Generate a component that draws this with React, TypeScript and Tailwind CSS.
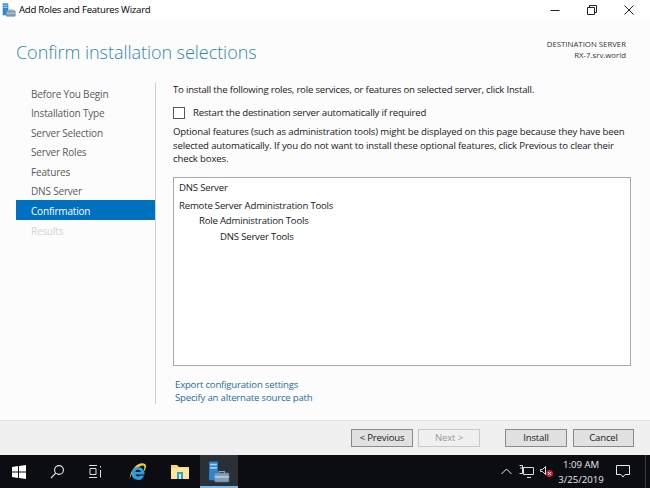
import React from "react";

const steps = ["Before You Begin", "Installation Type", "Server Selection", "Server Roles", "Features", "DNS Server"];

function AppIcon({ size = 14 }: { size?: number }) {
  return (
    <svg width={size} height={size} viewBox="0 0 20 20">
      <rect x="1" y="0.500" width="8" height="17" fill="#2a86d0" />
      <rect x="2" y="2.500" width="6" height="1.500" fill="#a9d4f2" />
      <rect x="2" y="5.500" width="6" height="1.500" fill="#a9d4f2" />
      <rect x="6" y="11" width="13" height="8" rx="1" fill="#7f9fb8" stroke="#5f7f98" strokeWidth="0.7" />
      <rect x="6" y="14" width="13" height="1" fill="#d5e2ec" />
      <path d="M10 11V9.500h5V11" fill="none" stroke="#8fa5b8" strokeWidth="1" />
    </svg>
  );
}

export default function App() {
  return (
    <div className="w-[650px] h-[488px] flex flex-col overflow-hidden bg-white text-[#1f1f1f] font-['Open_Sans','Noto_Sans',sans-serif] text-[10px] leading-none tracking-[-0.18px]">
      <div className="h-[20px] shrink-0 bg-white flex items-center pl-[2px]">
        <AppIcon />
        <span className="ml-[3px] text-[9.6px] tracking-[-0.25px] text-black">Add Roles and Features Wizard</span>
        <div className="ml-auto flex items-center text-[#222]">
          <svg width="10" height="10" viewBox="0 0 10 10" className="mr-[27px]"><path d="M0.500 5.500h9" stroke="#222" strokeWidth="1" /></svg>
          <svg width="10" height="10" viewBox="0 0 10 10" className="mr-[27px]"><path d="M0.500 2.500h7v7h-7zM2.500 2.500v-2h7v7h-2" fill="none" stroke="#222" strokeWidth="1" /></svg>
          <svg width="10" height="10" viewBox="0 0 10 10" className="mr-[16px]"><path d="M0.500 0.500l9 9M9.500 0.500l-9 9" stroke="#222" strokeWidth="1" /></svg>
        </div>
      </div>

      <div className="h-[400px] shrink-0 bg-[#fcfcfc] flex flex-col">
        <div className="h-[62px] shrink-0 flex justify-between pl-[16px] pr-[24px]">
          <h1 className="mt-[20px] text-[18px] leading-[24px] font-light text-[#2e88ad] tracking-[-0.05px]">Confirm installation selections</h1>
          <div className="mt-[19px] text-right text-[7.8px] leading-[11px] tracking-normal text-[#333]">
            <div>DESTINATION SERVER</div>
            <div>RX-7.srv.world</div>
          </div>
        </div>

        <div className="flex pl-[16px]">
          <nav className="w-[140px] h-[322px] shrink-0 border-r border-[#d0d0d0] text-[#5a5a5a]">
            <div className="flex flex-col pt-[2px]">
              {steps.map((s) => (
                <div key={s} className="h-[19.500px] flex items-center pl-[15px]">{s}</div>
              ))}
              <div className="-mt-[1px] h-[20px] pt-[2px] flex items-center pl-[15px] bg-[#0070c0] text-white">Confirmation</div>
              <div className="mt-[1px] h-[19.500px] flex items-center pl-[15px] text-[#d4d4d4]">Results</div>
            </div>
          </nav>

          <main className="w-[458px] ml-[17px] text-[9.6px] tracking-[-0.2px] text-[#1a1a1a]">
            <p className="h-[16px] flex items-center whitespace-nowrap">To install the following roles, role services, or features on selected server, click Install.</p>
            <label className="mt-[9px] flex items-center h-[12px]">
              <span className="w-[12px] h-[12px] border border-[#555] bg-white shrink-0" />
              <span className="ml-[8px]">Restart the destination server automatically if required</span>
            </label>
            <p className="mt-[6px] leading-[13.500px] tracking-[-0.15px]">
              Optional features (such as administration tools) might be displayed on this page because they have been selected automatically. If you do not want to install these optional features, click Previous to clear their check boxes.
            </p>
            <div className="mt-[11px] h-[189px] border border-[#a8a8a8] bg-white pl-[5px] pt-[4px]">
              <div className="h-[13px] flex items-center">DNS Server</div>
              <div className="mt-[4px] h-[15px] flex items-center">Remote Server Administration Tools</div>
              <div className="h-[15.500px] flex items-center pl-[20px]">Role Administration Tools</div>
              <div className="h-[15.500px] flex items-center pl-[41px]">DNS Server Tools</div>
            </div>
            <div className="mt-[13px] pl-[2px] text-[#1f6f9f]">
              <div className="h-[13px] flex items-center">Export configuration settings</div>
              <div className="h-[13px] flex items-center">Specify an alternate source path</div>
            </div>
          </main>
        </div>
      </div>

      <div className="h-[35px] shrink-0 bg-[#f0f0f0] border-t border-[#e4e4e4] flex items-start justify-end pr-[16px] pt-[8px] text-[9.6px]">
        <button className="w-[62px] h-[18px] bg-[#e1e1e1] border border-[#8a8a8a] text-[#222]">&lt; Previous</button>
        <button className="ml-[5px] w-[62px] h-[18px] bg-[#f0f0f0] border border-[#c8c8c8] text-[#9a9a9a]">Next &gt;</button>
        <button className="ml-[25px] w-[62px] h-[18px] bg-[#e1e1e1] border border-[#8a8a8a] text-[#222]">Install</button>
        <button className="ml-[6px] w-[61px] h-[18px] bg-[#e1e1e1] border border-[#8a8a8a] text-[#222]">Cancel</button>
      </div>

      <div className="flex-1 bg-[#0b0d12] flex items-center text-[#e8e8e8]">
        <div className="w-[38px] flex justify-center">
          <svg width="14" height="14" viewBox="0 0 14 14" fill="#fff"><path d="M0 2l6-.9V6.500H0zM7 1l7-1v6.500H7zM0 7.500h6v5.400L0 12zM7 7.500h7V14l-7-1z" /></svg>
        </div>
        <div className="w-[36px] flex justify-center ml-[1px]">
          <svg width="15" height="15" viewBox="0 0 15 15" fill="none" stroke="#e8e8e8" strokeWidth="1.100"><circle cx="9" cy="6" r="4.400" /><path d="M5.800 9.200L1 14" /></svg>
        </div>
        <div className="w-[38px] flex justify-center ml-[1px]">
          <svg width="14" height="13" viewBox="0 0 14 13" fill="none" stroke="#e0e0e0" strokeWidth="1"><path d="M1 .5h8M1 12.500h8M2 3.500h6v6H2zM12.500 1v1.500M12.500 5v7.500" /></svg>
        </div>
        <div className="w-[44px] flex justify-center ml-[2px]">
          <svg width="20" height="20" viewBox="0 0 20 20">
            <path d="M17 2C12 -1 3 5 1.500 17 4 10 9 4.500 15 3.500c2 .5 1.500 3 .5 5l1 .5c1.500-3 2.500-5.500.5-7z" fill="#f3c62d" />
            <path d="M10 5a6.300 6.300 0 0 0-6.300 6.500A6.300 6.300 0 0 0 16 13.500h-4a2.700 2.700 0 0 1-4.600-1h9.100a6.500 6.500 0 0 0-6.500-7.500zM7.300 10a2.800 2.800 0 0 1 5.500 0z" fill="#2a9fe0" />
          </svg>
        </div>
        <div className="w-[40px] flex justify-center">
          <svg width="18" height="16" viewBox="0 0 18 16">
            <path d="M0 1h6l2 2h10v12H0z" fill="#f6d97a" />
            <rect x="0" y="4" width="18" height="11" fill="#fbe59a" />
            <rect x="6" y="8" width="6" height="7" fill="#2a9fe0" />
            <rect x="8" y="10" width="2" height="5" fill="#fbe59a" />
          </svg>
        </div>
        <div className="w-[38px] h-full flex items-center justify-center bg-[#2b2f36] border-b-2 border-[#76b9ed] pt-[2px]">
          <AppIcon size={22} />
        </div>

        <div className="ml-auto h-full flex items-center">
          <svg width="11" height="7" viewBox="0 0 11 7" fill="none" stroke="#e8e8e8" strokeWidth="1"><path d="M.5 6l5-5 5 5" /></svg>
          <svg width="15" height="13" viewBox="0 0 15 13" fill="none" stroke="#dcdcdc" strokeWidth="1" className="ml-[7px]"><path d="M4.500 2.500h10v7h-10zM8 12.500h4M.5.500h3v8h-3M1 3h2" /></svg>
          <svg width="14" height="13" viewBox="0 0 14 13" className="ml-[6px]"><path d="M.5 4.500h2l3-3v8l-3-3h-2z" fill="none" stroke="#dcdcdc" /><circle cx="9.500" cy="8.500" r="3.500" fill="#e81123" /><path d="M8 7l3 3M11 7l-3 3" stroke="#fff" /></svg>
          <div className="ml-[4px] w-[46px] text-center text-[9.6px] leading-[15px] tracking-normal">
            <div>1:09 AM</div>
            <div>3/25/2019</div>
          </div>
          <svg width="14" height="13" viewBox="0 0 14 13" fill="none" stroke="#e8e8e8" strokeWidth="1" className="ml-[12px] mr-[15px]"><path d="M.5.500h13v9H9L7 12 5 9.500H.5z" /></svg>
          <div className="w-px h-full bg-[#3a3c42] mr-[4px]" />
        </div>
      </div>
    </div>
  );
}
